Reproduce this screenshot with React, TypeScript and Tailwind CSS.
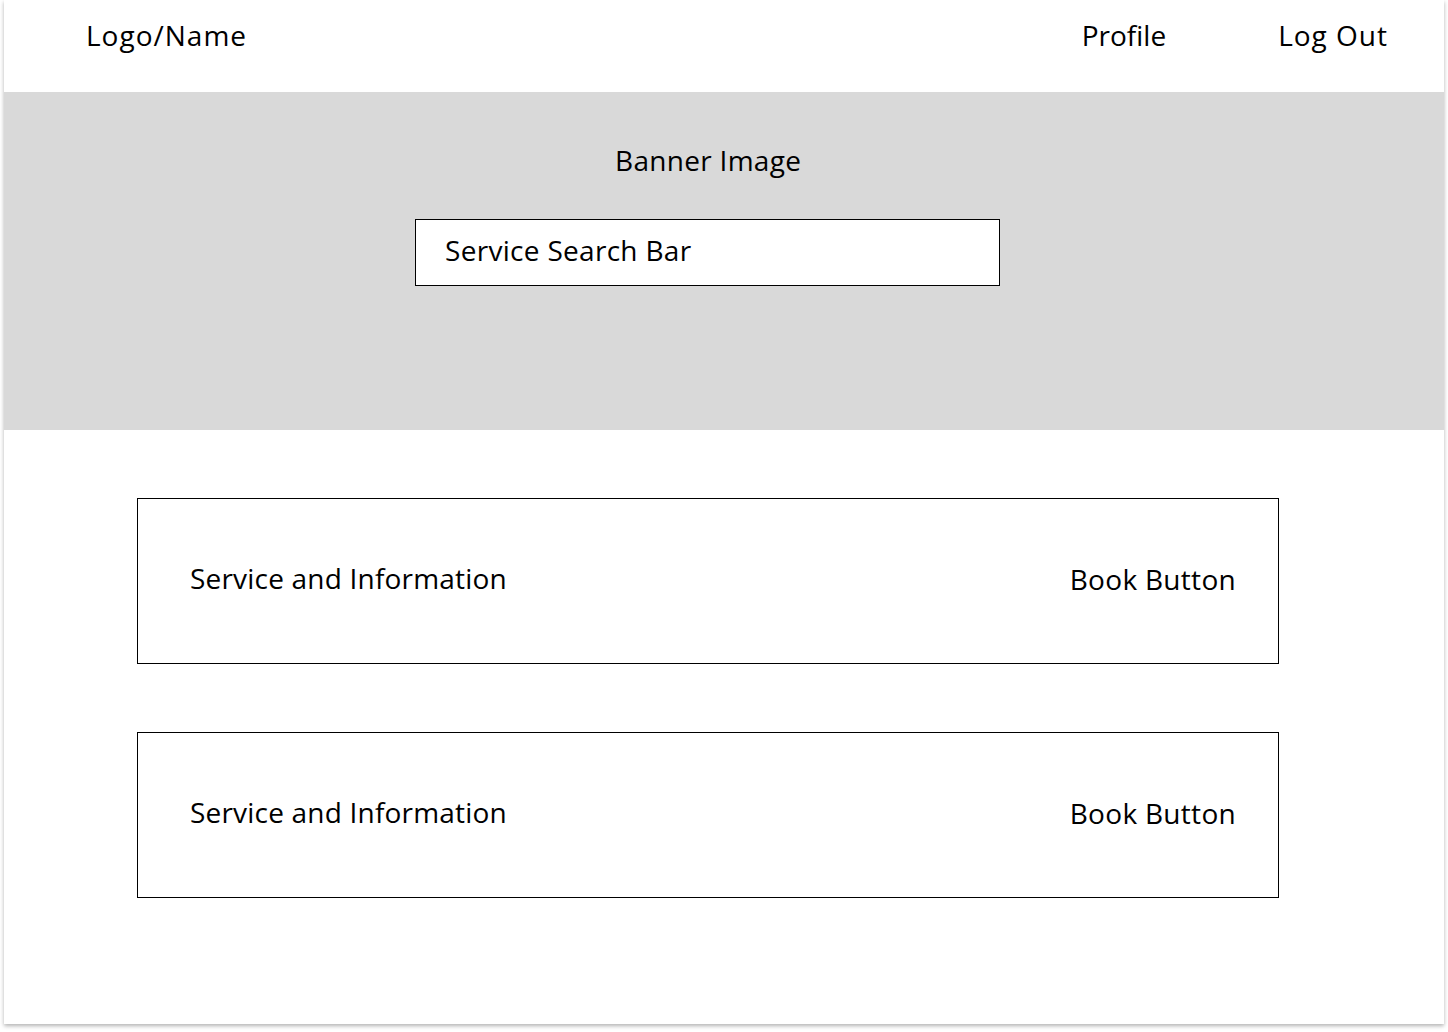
const ServiceRow = () => {
  return (
    <div className="ml-[133px] w-[1142px] h-[166px] border border-black flex items-center justify-between pl-[52px] pr-[42px]">
      <p className="-mt-[6px] tracking-[0.2px]">Service and Information</p>
      <p className="-mt-[4px] tracking-[0.3px]">Book Button</p>
    </div>
  );
};

const App = () => {
  return (
    <div className="w-[1448px] h-[1032px] bg-white overflow-hidden font-['Open_Sans','Noto_Sans',sans-serif] text-[28px] leading-none text-black">
      <div className="ml-[4px] w-[1440px] h-[1024px] bg-white shadow-[0_2px_4px_rgba(0,0,0,0.3)] flex flex-col">
        <div className="h-[92px] flex items-center pl-[82px] pb-[22px]">
          <p className="tracking-[1px]">Logo/Name</p>
          <p className="ml-auto">Profile</p>
          <p className="ml-[112px] mr-[56px] tracking-[1px]">Log Out</p>
        </div>
        <div className="h-[338px] bg-[#d9d9d9] flex flex-col">
          <p className="ml-[611px] mt-[54px] tracking-[0.3px]">Banner Image</p>
          <div className="ml-[411px] mt-[45px] w-[585px] h-[67px] bg-white border border-black flex items-center pl-[29px] pb-[5px]">
            <p className="tracking-[0.3px]">Service Search Bar</p>
          </div>
        </div>
        <div className="mt-[68px] flex flex-col gap-[68px]">
          <ServiceRow />
          <ServiceRow />
        </div>
      </div>
    </div>
  );
};

export default App;
